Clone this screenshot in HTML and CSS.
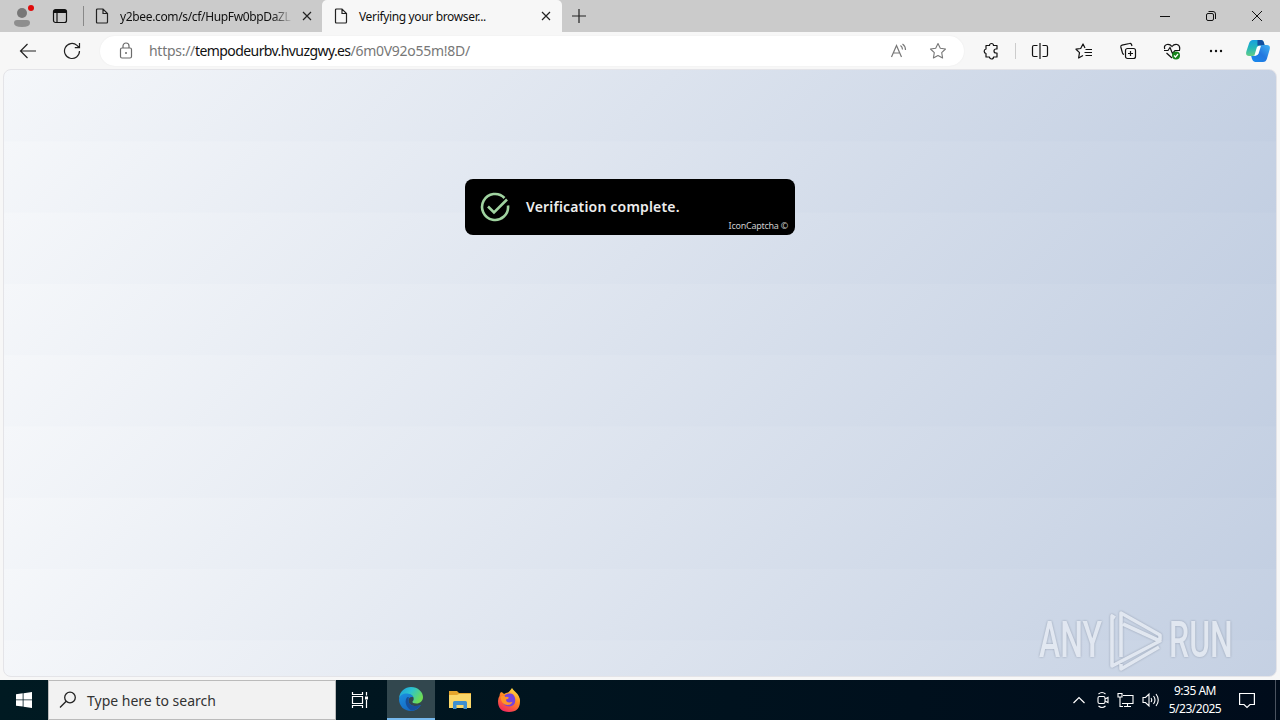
FILE: index.html
```html
<!DOCTYPE html>
<html lang="en">
<head>
    <meta charset="UTF-8">
    <meta name="viewport" content="width=device-width, initial-scale=1.0">
    <title>Verifying your browser...</title>
    <link rel="stylesheet" href="styles.css">
</head>
<body>
    <header class="tab-strip">
        <div class="profile">
            <svg width="24" height="24" viewBox="0 0 24 24"><circle cx="11" cy="9" r="5" fill="#777"/><path d="M3 19q0-3 3-3h10q3 0 3 3 0 4-8 4t-8-4z" fill="#8e8e8e"/><circle cx="20" cy="4" r="3" fill="#e00b0b"/></svg>
        </div>
        <svg class="workspaces" width="16" height="16" viewBox="0 0 16 16" fill="none" stroke="#111" stroke-width="1.2"><rect x="1.5" y="1.5" width="13" height="13" rx="2"/><path d="M2 3.5h12" stroke-width="3"/><path d="M5 4v10"/></svg>
        <div class="strip-divider"></div>
        <div class="tab tab-first">
            <svg class="page-icon" width="14" height="16" viewBox="0 0 14 16" fill="none" stroke="#222" stroke-width="1.2"><path d="M1.5 2q0-1 1-1H8l4.5 4.5V14q0 1-1 1h-9q-1 0-1-1zM8 1v4.5h4.5"/></svg>
            <span class="tab-title tab-title-faded">y2bee.com/s/cf/HupFw0bpDaZL</span>
            <svg class="close" width="10" height="10" viewBox="0 0 10 10" fill="none" stroke="#222" stroke-width="1.2"><path d="M1 1l8 8M9 1L1 9"/></svg>
        </div>
        <div class="tab tab-active">
            <svg class="page-icon" width="14" height="16" viewBox="0 0 14 16" fill="none" stroke="#222" stroke-width="1.2"><path d="M1.5 2q0-1 1-1H8l4.5 4.5V14q0 1-1 1h-9q-1 0-1-1zM8 1v4.5h4.5"/></svg>
            <span class="tab-title tab-title-active">Verifying your browser...</span>
            <svg class="close" width="10" height="10" viewBox="0 0 10 10" fill="none" stroke="#222" stroke-width="1.2"><path d="M1 1l8 8M9 1L1 9"/></svg>
        </div>
        <svg class="new-tab" width="14" height="14" viewBox="0 0 14 14" stroke="#222" stroke-width="1.2"><path d="M7 0v14M0 7h14"/></svg>
        <div class="window-buttons">
            <svg width="12" height="12" viewBox="0 0 12 12" fill="none" stroke="#111"><path d="M1 6.5h10"/></svg>
            <svg width="12" height="12" viewBox="0 0 12 12" fill="none" stroke="#111"><rect x="1.5" y="3.5" width="7" height="7" rx="1.5"/><path d="M3.5 1.5H8q2.5 0 2.5 2.5v5"/></svg>
            <svg width="12" height="12" viewBox="0 0 12 12" fill="none" stroke="#111"><path d="M1 1l10 10M11 1L1 11"/></svg>
        </div>
    </header>

    <nav class="toolbar">
        <svg class="back" width="18" height="16" viewBox="0 0 18 16" fill="none" stroke="#222" stroke-width="1.2"><path d="M17 8H1.5M8.5 1l-7 7 7 7"/></svg>
        <svg class="reload" width="18" height="18" viewBox="0 0 18 18" fill="none" stroke="#222" stroke-width="1.2"><path d="M16.5 9a7.5 7.5 0 1 1-2.5-5.6L16.2 5.5M16.5 1v4.7h-4.7"/></svg>
        <div class="address">
            <svg class="lock" width="14" height="18" viewBox="0 0 14 18" fill="none" stroke="#6b6b6b" stroke-width="1.2"><rect x="1.5" y="6" width="11" height="10" rx="1.5"/><path d="M4 6V4a3 3 0 0 1 6 0v2"/><circle cx="7" cy="11" r=".4" fill="#6b6b6b"/></svg>
            <span class="url">https://<span class="host">tempodeurbv.hvuzgwy.es</span>/6m0V92o55m!8D/</span>
            <svg class="read-aloud" width="18" height="16" viewBox="0 0 18 16" fill="none" stroke="#777" stroke-width="1.2"><path d="M1.5 14L6.5 2.5l5 11.5M3.2 10h6.6M10.5 2.5q2 1.5 2 4M12.5 1q3 2 3 6"/></svg>
            <svg class="favorite" width="18" height="18" viewBox="0 0 18 18" fill="none" stroke="#777" stroke-width="1.1" stroke-linejoin="round"><path d="M9 1.5l2.3 4.8 5.2.7-3.8 3.7.9 5.3L9 13.5 4.4 16l.9-5.3L1.5 7l5.2-.7z"/></svg>
        </div>
        <div class="tools">
            <svg width="18" height="18" viewBox="0 0 18 18" fill="none" stroke="#111" stroke-width="1.2" stroke-linejoin="round"><path d="M4 3.5h3.5a2 2 0 0 1 4 0H15V7h-1a2 2 0 0 0 0 4h1v4h-3.5a2 2 0 0 1-4 0H4v-3.5a2.3 2.3 0 0 1 0-4.500z"/></svg>
            <div class="tool-divider"></div>
            <svg width="18" height="18" viewBox="0 0 18 18" fill="none" stroke="#111" stroke-width="1.2"><path d="M6.5 3.5H3q-1.500 0-1.500 1.500v8q0 1.500 1.500 1.500h3.500M11.500 3.500H15q1.500 0 1.500 1.500v8q0 1.500-1.500 1.500h-3.500M9 1v16"/></svg>
            <svg width="18" height="18" viewBox="0 0 18 18" fill="none" stroke="#111" stroke-width="1.2" stroke-linejoin="round"><path d="M10 6L8 2 5.700 6.500 1 7.200l3.500 3.400L3.600 16 8 13.500M10.500 7.500H17M9.500 10.500H17M10.500 13.500H17"/></svg>
            <svg width="18" height="18" viewBox="0 0 18 18" fill="none" stroke="#111" stroke-width="1.2"><rect x="6.5" y="6.5" width="10" height="10" rx="2"/><path d="M11.500 9v5M9 11.500h5M13 4l-.5-1.500Q12 1 10.500 1.500L3 3.200q-1.500.4-1.200 1.800l1.700 6q.4 1.300 1.500 1.500"/></svg>
            <svg width="18" height="18" viewBox="0 0 18 18" fill="none" stroke="#111" stroke-width="1.2"><path d="M1.800 7Q.5 3.500 4 2.500q3-.5 5 2 2-2.500 5-2 3.500 1 2.500 5.500M1 8.500h4l2-3 2.500 6L12 8.500h5M3.500 11l5.500 5"/><circle cx="13" cy="13.500" r="4" fill="#16831b" stroke="none"/><path d="M11 13.500l1.500 1.500 2.500-3" stroke="#fff"/></svg>
            <svg width="18" height="18" viewBox="0 0 18 18" fill="#111"><circle cx="4" cy="9" r="1.2"/><circle cx="9" cy="9" r="1.2"/><circle cx="14" cy="9" r="1.2"/></svg>
        </div>
        <svg class="copilot" width="24" height="22" viewBox="0 0 24 22">
            <defs>
                <linearGradient id="cp-left" x1=".3" y1="0" x2=".4" y2="1"><stop offset="0" stop-color="#159fe0"/><stop offset=".5" stop-color="#25b8b8"/><stop offset="1" stop-color="#67ce84"/></linearGradient>
                <linearGradient id="cp-right" x1="1" y1="0" x2="0" y2="1"><stop offset="0" stop-color="#41b4f4"/><stop offset=".5" stop-color="#2377df"/><stop offset="1" stop-color="#168cf0"/></linearGradient>
            </defs>
            <path d="M7 0h8q2 0 3 3l.5 2-7 2-2 7q-.8 2-3 2H3q-4 0-2.500-5L3 3.500Q4 0 7 0z" fill="url(#cp-left)"/>
            <path d="M11.500 0H15q2.500 0 3 3l.6 2.500h-7.200z" fill="#124f9f"/>
            <path d="M17 22H9q-2 0-3-3l-.8-3H8q2 0 3-1l2.500-8q.8-2 3.200-2H21q4 0 2.500 5L21 18.500Q20 22 17 22z" fill="url(#cp-right)"/>
            <path d="M10.800 7.500Q11.500 5.800 13.200 5.800H15l-2.300 7.500q-.7 2-2.500 2H8.500z" fill="#fff"/>
        </svg>
    </nav>

    <main class="page">
        <div class="captcha">
            <svg class="captcha-check" width="30" height="30" viewBox="0 0 30 30" fill="none" stroke="#a0d3a0" stroke-width="2.6"><path d="M24.5 6A13 13 0 1 0 28 13.5"/><path d="M8 14.5l6 6L27 7.5"/></svg>
            <span class="captcha-title">Verification complete.</span>
            <span class="captcha-credit">IconCaptcha ©</span>
        </div>
        <div class="watermark">
            <span class="any">ANY</span>
            <svg width="56" height="64" viewBox="0 0 56 64" fill="none" stroke="#e6ebf3" stroke-width="3.6" stroke-linejoin="round"><path d="M8 10L5 8v50l48-25L16 16M14 49V5l39 22v5M14 56v5l38-22"/></svg>
            <span class="run">RUN</span>
        </div>
    </main>

    <footer class="taskbar">
        <div class="start">
            <svg width="16" height="16" viewBox="0 0 16 16" fill="#fff"><path d="M0 2.300L6.700 1.300v6.200H0zM7.500 1.200L16 0v7.500H7.500zM0 8.300h6.700v6.300L0 13.700zM7.500 8.300H16V16l-8.500-1.200z"/></svg>
        </div>
        <div class="search">
            <svg width="18" height="18" viewBox="0 0 18 18" fill="none" stroke="#222" stroke-width="1.3"><circle cx="11" cy="6.5" r="5.3"/><path d="M7.2 10.3L1 16.5"/></svg>
            <span>Type here to search</span>
        </div>
        <div class="task task-view">
            <svg width="18" height="18" viewBox="0 0 18 18" fill="none" stroke="#fff" stroke-width="1.2"><path d="M1.500 1v2.500h10V1M1.500 17v-2.500h10V17M1.500 5.500h10v7h-10zM15.500 1v3.500M15.500 9v8"/><path d="M14 5.500h3v3h-3z" fill="#fff" stroke="none"/></svg>
        </div>
        <div class="task task-active">
            <svg width="24" height="24" viewBox="0 0 24 24">
                <defs>
                    <linearGradient id="edge-top" x1="0" y1="0" x2="1" y2=".5"><stop offset="0" stop-color="#1c9bdc"/><stop offset=".5" stop-color="#2cc3cf"/><stop offset="1" stop-color="#6ddc54"/></linearGradient>
                    <linearGradient id="edge-low" x1="0" y1="0" x2=".6" y2="1"><stop offset="0" stop-color="#1b8fe0"/><stop offset="1" stop-color="#1567c0"/></linearGradient>
                </defs>
                <path d="M0 11C1 4 6 0 12 0c7 0 12 5 12 10 0 4-3 6.500-6.500 6.500-3 0-4.500-1-4-2 1-1 1.500-2 1-4C13.500 7 7 5 0 11z" fill="url(#edge-top)"/>
                <path d="M0 12C1 7.500 5 6 8.500 6.500c3 .3 5.500 2 6 4-3-1.500-5.500 1-5 4 .8 4 6.500 6 12.500 3.500C19.500 22 16 24 12 24 5 24 0 19 0 12z" fill="url(#edge-low)"/>
                <path d="M8.500 10C5 13 6.500 20 12 23.500c4 0 7.500-2 10-5.500-6 2.500-11.700.5-12.500-3.500-.3-1.500 0-3 .8-4z" fill="#174f9b"/>
            </svg>
        </div>
        <div class="task">
            <svg width="22" height="20" viewBox="0 0 22 20"><path d="M0 1h8l2 2h12v4H0z" fill="#e5a52c"/><path d="M0 5h8l2-1h12v14H0z" fill="#fbd769"/><path d="M4 19v-6.500Q4 11 5.500 11h11q1.500 0 1.500 1.500V19h-3.500v-4h-7v4z" fill="#3f8fd0"/></svg>
        </div>
        <div class="task">
            <svg width="24" height="24" viewBox="0 0 24 24">
                <defs><linearGradient id="fox" x1=".8" y1="0" x2=".3" y2="1"><stop offset="0" stop-color="#ffe44a"/><stop offset=".45" stop-color="#ff8a20"/><stop offset="1" stop-color="#f3275f"/></linearGradient></defs>
                <path d="M4 4q2 .5 3 2 2-1.500 4-1.500Q13 3 15 0q1.500 2.500 3.500 4 4.500 4 4.500 9 0 11-11 11T1 13q0-3 1.500-5 0-2.500 1.500-4z" fill="url(#fox)"/>
                <path d="M8 7q8-4 10 3 1.500 8-6 8.500-6.500-.5-6-6z" fill="#7543dc"/>
                <path d="M3.500 9q3-2.500 5 0 2-.5 3.500.8-1 1.700-3 1.700 0 3 3.500 3 1.500 0 3-.8-1 3.300-5 3.300-6 0-7-8z" fill="#ff9527"/>
            </svg>
        </div>
        <div class="tray">
            <svg width="14" height="16" viewBox="0 0 14 16" fill="none" stroke="#fff" stroke-width="1.2"><path d="M1.5 11L7 5.5l5.5 5.5"/></svg>
            <svg width="12" height="18" viewBox="0 0 12 18" fill="none" stroke="#fff" stroke-width="1.1"><rect x="1" y="5.500" width="7" height="7" rx="1.5"/><path d="M8 8l3-1.500v5L8 10M1.500 3q3.500-3 7 0M1.500 15q3.500 3 7 0"/></svg>
            <svg width="17" height="16" viewBox="0 0 17 16" fill="none" stroke="#fff" stroke-width="1.1"><path d="M6 3.500h10v8H5M7 14.500h7M10.500 11.500v3M1 1.500h4V5H1zM3 5v9.500h3"/></svg>
            <svg width="18" height="16" viewBox="0 0 18 16" fill="none" stroke="#fff" stroke-width="1.1"><path d="M1 5.500h2.500L7 2v12l-3.500-3.500H1zM9 6q1.500 2 0 4M11.500 4q3 4 0 8M14 2q4.500 6 0 12"/></svg>
        </div>
        <div class="clock">
            <span>9:35 AM</span>
            <span>5/23/2025</span>
        </div>
        <svg class="notifications" width="16" height="18" viewBox="0 0 16 18" fill="none" stroke="#fff" stroke-width="1.2"><path d="M.6 2.500h14.800v11H11L8 16.500l-3-3H.6z"/></svg>
        <div class="show-desktop"></div>
    </footer>
</body>
</html>
```
FILE: styles.css
```css
* {
    box-sizing: border-box;
}

body {
    display: flex;
    flex-direction: column;
    width: 1280px;
    height: 720px;
    margin: 0;
    overflow: hidden;
    background-color: #f7f7f7;
    font-family: 'Noto Sans', 'Open Sans', sans-serif;
    color: #111;
}

svg {
    display: block;
    flex: none;
}

span {
    white-space: nowrap;
}

/* Tabs */
.tab-strip {
    display: flex;
    align-items: center;
    height: 32px;
    background-color: #cbcbcb;
}

.profile {
    width: 52px;
    padding-left: 11px;
}

.strip-divider {
    width: 1px;
    height: 20px;
    margin-left: 15px;
    background-color: #888;
}

.tab {
    display: flex;
    align-items: center;
    height: 32px;
    font-size: 12px;
}

.tab-first {
    width: 238px;
    padding-left: 11px;
}

.tab-active {
    width: 240px;
    padding-left: 12px;
    background-color: #f7f7f7;
    border-radius: 5px 5px 0 0;
}

.tab-title {
    width: 173px;
    margin-left: 11px;
}

.tab-title-faded {
    letter-spacing: -0.35px;
    -webkit-mask-image: linear-gradient(90deg, #000 88%, transparent);
    mask-image: linear-gradient(90deg, #000 88%, transparent);
}

.tab-title-active {
    letter-spacing: -0.35px;
}

.close {
    margin-left: 9px;
}

.new-tab {
    margin-left: 10px;
}

.window-buttons {
    display: flex;
    gap: 34px;
    margin-left: auto;
    padding-right: 17px;
}

/* Toolbar */
.toolbar {
    display: flex;
    align-items: center;
    height: 37px;
    padding-left: 19px;
    flex: none;
}

.reload {
    margin-left: 26px;
}

.address {
    display: flex;
    align-items: center;
    width: 864px;
    height: 30px;
    margin-left: 19px;
    padding: 0 17px 0 19px;
    border-radius: 15px;
    background-color: #fff;
    box-shadow: 0 0 2px rgba(0, 0, 0, 0.06);
}

.url {
    margin-left: 16px;
    font-size: 14px;
    letter-spacing: -0.28px;
    color: #777;
}

.host {
    letter-spacing: -0.58px;
    color: #111;
}

.read-aloud {
    margin-left: auto;
}

.favorite {
    margin-left: 21px;
}

.tools {
    display: flex;
    align-items: center;
    gap: 26px;
    margin-left: 18px;
}

.tool-divider {
    width: 1px;
    height: 16px;
    margin: 0 -11px;
    background-color: #ccc;
}

.copilot {
    margin-left: 21px;
}

/* Page: the gradient repeats down in short bands */
.page {
    display: flex;
    flex-direction: column;
    align-items: center;
    justify-content: space-between;
    height: 608px;
    margin: 0 3px 3px;
    padding: 109px 0 4px;
    border: 1px solid #e4e4e8;
    border-radius: 8px;
    background: linear-gradient(135deg, #f5f7fa, #c3cfe2) 0 0 / 100% 71.3px;
    flex: none;
}

.captcha {
    position: relative;
    display: flex;
    align-items: center;
    width: 330px;
    height: 56px;
    margin-right: 20px;
    padding-left: 15px;
    border-radius: 8px;
    background-color: #000;
    color: #eee;
}

.captcha-title {
    margin-left: 16px;
    padding-bottom: 2px;
    font-size: 14px;
    font-weight: 600;
    letter-spacing: 0.18px;
}

.captcha-credit {
    position: absolute;
    right: 7px;
    bottom: 3px;
    font-size: 9px;
    line-height: 12px;
    letter-spacing: -0.25px;
    color: #ccc;
}

.watermark {
    display: flex;
    align-items: center;
    align-self: flex-end;
    height: 64px;
    margin-right: 43px;
    color: #e6ebf3;
    font-family: Roboto, sans-serif;
    font-size: 50px;
    font-weight: 500;
    opacity: 0.85;
    filter: drop-shadow(0 0 1px #8c97a9);
}

.any,
.run {
    width: 64px;
    transform: scaleX(0.64);
    transform-origin: left;
}

.watermark svg {
    margin: 0 6px 0 4px;
}

/* Taskbar */
.taskbar {
    display: flex;
    align-items: center;
    height: 40px;
    background: linear-gradient(90deg, #001a22, #000c1b);
    color: #fff;
    flex: none;
}

.start,
.task {
    display: flex;
    align-items: center;
    justify-content: center;
    width: 48px;
    height: 40px;
    margin-right: 1px;
}

.start {
    margin-right: 0;
}

.task-view {
    padding-right: 5px;
}

.task-active {
    background-color: #32474e;
    border-bottom: 2px solid #76b9ed;
}

.search {
    display: flex;
    align-items: center;
    width: 288px;
    height: 40px;
    margin-right: 2px;
    padding-left: 10px;
    gap: 10px;
    border: 1px solid #bbb;
    background-color: #f2f2f2;
    color: #333;
    font-size: 14px;
}

.tray {
    display: flex;
    align-items: center;
    gap: 8px;
    margin-left: auto;
}

.tray svg:first-child {
    margin-right: 3px;
}

.clock {
    display: flex;
    flex-direction: column;
    align-items: center;
    width: 64px;
    margin: 0 12px 0 3px;
    font-size: 12px;
    line-height: 18px;
    letter-spacing: -0.5px;
}

.show-desktop {
    width: 5px;
    height: 40px;
    margin-left: 20px;
    border-left: 1px solid #4a5360;
}
```
